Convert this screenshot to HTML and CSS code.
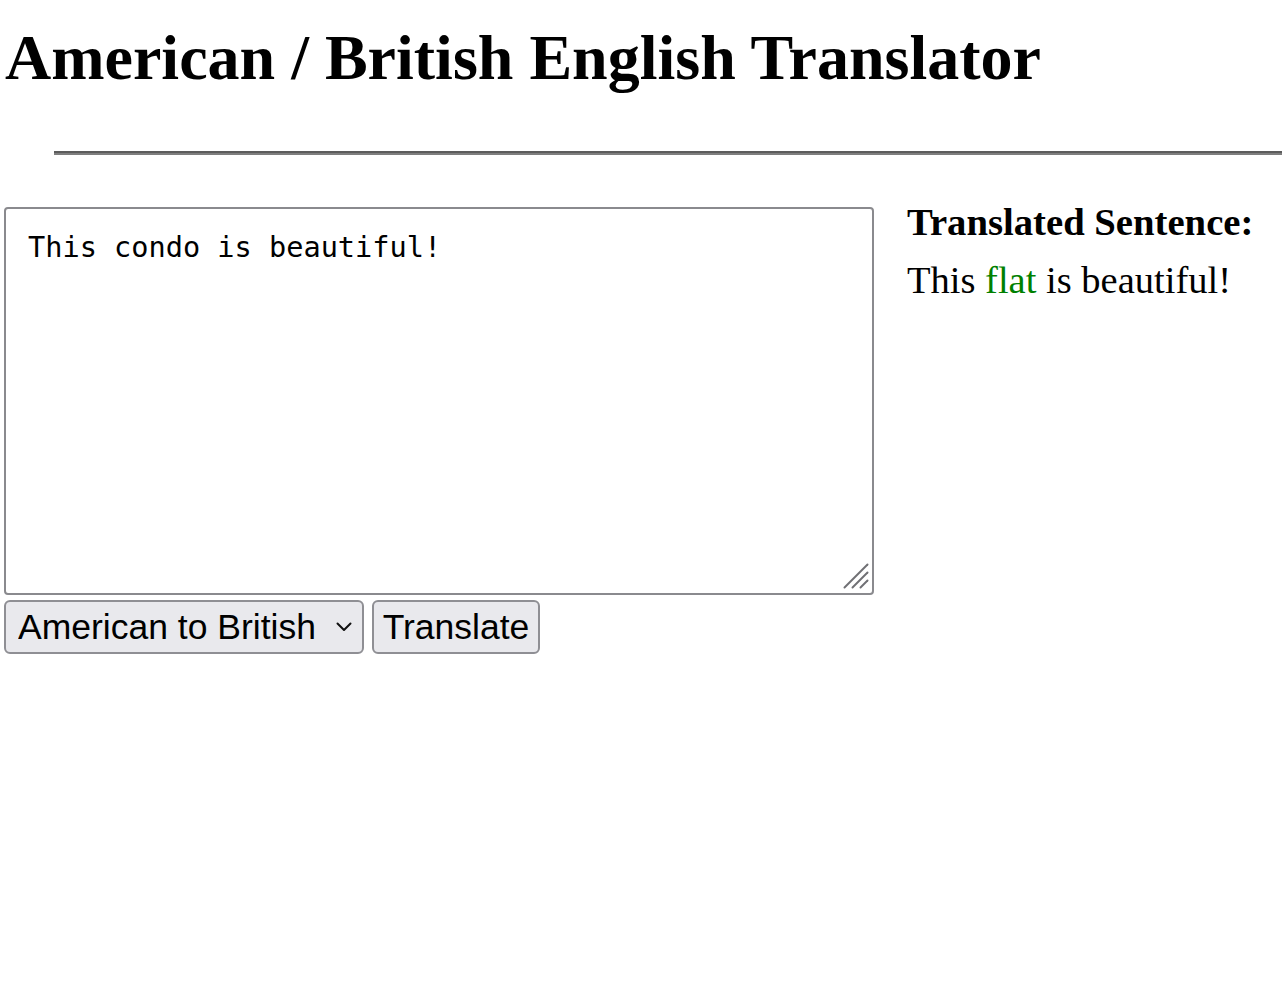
FILE: index.html
```html
<!DOCTYPE html>
<html lang="en">
<head>
<meta charset="utf-8">
<title>American / British English Translator</title>
<link rel="stylesheet" href="styles.css">
</head>
<body>
<header class="page-header">
  <h1 class="title">American / British English Translator</h1>
  <hr class="rule">
</header>
<main class="translator">
  <section class="input-col">
    <div class="textarea-wrap">
      <textarea class="text-input" rows="10" cols="60">This condo is beautiful!</textarea>
      <svg class="grip" width="26" height="26" viewBox="0 0 26 26"><g stroke="#707074" stroke-width="2" stroke-linecap="round"><path d="M1.5 24.5 L24.5 1.5"/><path d="M9.5 24.5 L24.5 9.5"/><path d="M17.5 24.5 L24.5 17.5"/></g></svg>
    </div>
    <div class="controls">
      <div class="select-wrap">
        <select class="locale-select">
          <option>American to British</option>
          <option>British to American</option>
        </select>
        <svg class="chevron" width="16" height="10" viewBox="0 0 16 10"><path d="M1.5 1.5 L8 8 L14.5 1.5" fill="none" stroke="#111" stroke-width="2" stroke-linecap="round" stroke-linejoin="round"/></svg>
      </div>
      <button class="translate-btn" type="button">Translate</button>
    </div>
  </section>
  <section class="output-col">
    <h3 class="out-title">Translated Sentence:</h3>
    <p class="out-text">This <span class="highlight">flat</span> is beautiful!</p>
  </section>
</main>
</body>
</html>
```
FILE: styles.css
```css
html, body {
  margin: 0;
  padding: 0;
  background: #fff;
}
body {
  font-family: "Liberation Serif", "Times New Roman", serif;
  color: #000;
}
.title {
  font-size: 64px;
  font-weight: bold;
  margin: 21px 0 0 5px;
  line-height: normal;
}
.rule {
  margin: 56px 0 0 54px;
  height: 0;
  border: none;
  border-top: 2px solid #5c5c5c;
  border-bottom: 2px solid #7e7e7e;
}
.translator {
  display: flex;
  margin-top: 52px;
  padding-left: 4px;
}
.input-col {
  width: 870px;
  display: flex;
  flex-direction: column;
}
.textarea-wrap {
  position: relative;
  display: flex;
}
.text-input {
  box-sizing: border-box;
  width: 870px;
  height: 388px;
  margin: 0;
  border: 2px solid #8a8a8e;
  border-radius: 4px;
  padding: 21px 22px 20px;
  font-family: "DejaVu Sans Mono", "Liberation Mono", monospace;
  font-size: 28.6px;
  line-height: 1.2;
  color: #000;
  background: #fff;
  resize: none;
}
.grip {
  position: absolute;
  right: 5px;
  bottom: 6px;
  pointer-events: none;
}
.controls {
  display: flex;
  gap: 8px;
  margin-top: 5px;
}
.select-wrap {
  position: relative;
  display: flex;
}
.locale-select,
.translate-btn {
  box-sizing: border-box;
  height: 54px;
  border: 2px solid #8f8f94;
  border-radius: 6px;
  background: #e9e9ed;
  color: #000;
  font-family: "Liberation Sans", Arial, sans-serif;
  font-size: 35.5px;
  margin: 0;
}
.locale-select {
  -webkit-appearance: none;
  appearance: none;
  width: 360px;
  padding: 0 0 0 12px;
}
.chevron {
  position: absolute;
  right: 12px;
  top: 22px;
  pointer-events: none;
}
.translate-btn {
  width: 168px;
  padding: 0 8px;
}
.output-col {
  margin-left: 33px;
  margin-top: -7px;
}
.out-title {
  font-size: 38.7px;
  font-weight: bold;
  margin: 0;
  line-height: normal;
}
.out-text {
  font-size: 38.5px;
  margin: 14px 0 0;
  line-height: normal;
}
.highlight {
  color: green;
}
```
